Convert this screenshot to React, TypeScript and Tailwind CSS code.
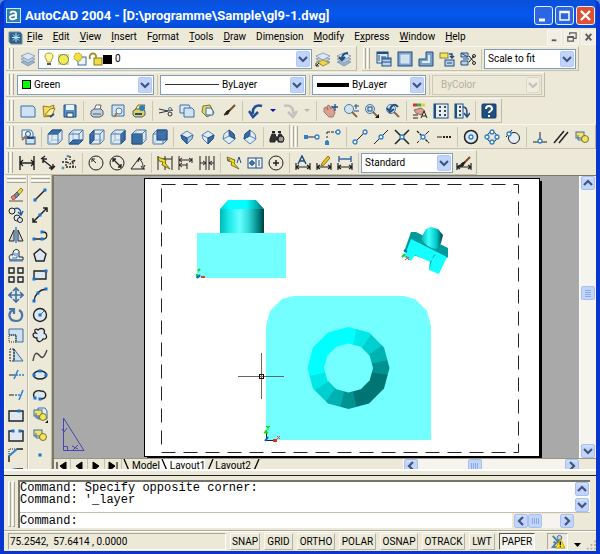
import React, { type ReactNode } from "react";

const B = "#3a6ea5";
const D = "#1f4e82";
const L = "#b9d2ea";

/* ---------- Icon fragments, all on a 16 x 16 grid ---------- */

const cubeFaces: Record<string, string> = {
  top: "M1 5L5 1H15L11 5Z",
  bottom: "M1 15L5 11H15L11 15Z",
  left: "M1 5L5 1V11L1 15Z",
  right: "M11 5L15 1V11L11 15Z",
  front: "M1 5H11V15H1Z",
  back: "M5 1H15V11H5Z",
};

function Cube({ face }: { face: string }) {
  return (
    <g strokeWidth="1" stroke="#4a78a8">
      <path d="M1 5L5 1H15V11L11 15H1Z" fill="#dfeaf5" />
      <path d="M5 1V11H15M5 11L1 15" stroke="#9db9d6" />
      <path d={cubeFaces[face]} fill={B} stroke={D} />
      <path d="M1 5H11V15M11 5L15 1" />
    </g>
  );
}

const isoFaces: Record<string, string> = {
  sw: "M2 6L8 9V15L3 10Z",
  se: "M8 9L14 6L13 10L8 15Z",
  ne: "M8 1L13 5L14 10L9 7Z",
  nw: "M8 1L3 5L2 10L7 7Z",
};

function Iso({ face }: { face: string }) {
  const low = face === "sw" || face === "se";
  return (
    <g stroke="#4a78a8" strokeWidth="0.9">
      {low ? (
        <path d="M8 2L14 6L13 10L8 15L3 10L2 6Z" fill="#e2ecf6" />
      ) : (
        <path d="M8 1L13 5L14 10L8 15L2 10L3 5Z" fill="#e2ecf6" />
      )}
      <path d={low ? "M2 6L8 9L14 6M8 9V15" : "M2 10L8 7L14 10M8 7V1"} />
      {face === "sw" && <path d="M8 9L14 6L13 10L8 15Z" fill="#a9c4df" />}
      <path d={isoFaces[face]} fill={B} stroke={D} />
    </g>
  );
}

const Node = ({ x, y }: { x: number; y: number }) => (
  <circle cx={x} cy={y} r="2" fill="#fff" stroke="#2f7fd0" strokeWidth="1.3" />
);
const Dot = ({ x, y }: { x: number; y: number }) => (
  <rect x={x - 1.5} y={y - 1.5} width="3" height="3" fill="#1673d1" stroke="none" />
);
const Sheet = () => <path d="M1 3H13L15 5V14H1Z" fill="#cfe2f4" stroke={B} />;
const Layers = () => (
  <g strokeWidth="0.7" stroke="#7288a0">
    <path d="M1 11L8 8L15 11L8 15Z" fill="#9fb7cf" />
    <path d="M1 8L8 5L15 8L8 12Z" fill="#bcd0e3" />
    <path d="M1 5L8 2L15 5L8 9Z" fill="#dbe7f2" />
  </g>
);
const Pencil = () => (
  <path d="M12 1L14 3L8 10L5 11L6 8Z" fill="#f0c020" stroke="#7a5a10" strokeWidth="0.8" />
);
const Brush = () => (
  <g>
    <path d="M14 2L8 8" stroke="#7b4a26" strokeWidth="2" />
    <path d="M9 7L7 11L3 12L6 8Z" fill="#222" />
  </g>
);
const Lens = () => (
  <g>
    <circle cx="6" cy="6" r="4.500" fill="#cfe3f4" stroke="#56789c" />
    <path d="M9 9L14 14" stroke="#8a6a4a" strokeWidth="2" />
  </g>
);
const Dim = () => (
  <path d="M1 8V15M15 8V15M1 12H15M4 10L1 12L4 14M12 10L15 12L12 14" strokeWidth="1.2" />
);
const Bolt = () => (
  <path d="M1 2L9 5L8 8L13 14L5 10L6 7L2 6Z" fill="#f3dc20" stroke="#5c5414" strokeWidth="0.8" />
);
const Region = () => (
  <g>
    <rect x="2" y="3" width="8" height="6" fill="#f5e463" stroke={B} />
    <circle cx="11" cy="10" r="3.500" fill="#f5e463" stroke="#7b7420" />
    <path d="M4 6V11H8" stroke={B} />
  </g>
);

const icons: Record<string, ReactNode> = {
  layers: <Layers />,
  layerCurrent: (
    <>
      <Layers />
      <path d="M3 11L8 9L14 12L8 15Z" fill="#f1d63c" stroke="#98821c" strokeWidth="0.7" />
      <path d="M1 15L4 12M1 12V15H4" />
    </>
  ),
  layerPrev: (
    <>
      <Layers />
      <path d="M6 8C6 3 9 2 12 2M3 6L6 9L9 6" stroke={D} strokeWidth="2" />
    </>
  ),
  viewports: (
    <g stroke={D}>
      <rect x="1" y="1" width="11" height="11" fill="#dce8f4" />
      <path d="M1 2H12" strokeWidth="2" />
      <path d="M3 4V10M5 6H10" />
      <rect x="6" y="7" width="9" height="8" fill={L} />
      <path d="M6 8H15M6 11H15" />
    </g>
  ),
  single: (
    <g stroke={D}>
      <rect x="1" y="1" width="14" height="14" fill="#7ba3ca" />
      <rect x="4" y="4" width="8" height="8" fill="#cfe0f0" stroke="#dfeaf6" />
    </g>
  ),
  polyView: (
    <g stroke={D}>
      <path d="M8 1H15V15H1V8H8Z" fill="#7ba3ca" />
      <path d="M11 4V11H4" stroke="#dfeaf6" strokeWidth="2" />
    </g>
  ),
  objView: (
    <g stroke={D}>
      <rect x="1" y="2" width="8" height="5" fill="#f5e463" stroke="#8b8330" />
      <path d="M10 3H13V7M11 5L13 7L15 5" strokeWidth="1.500" />
      <rect x="6" y="9" width="9" height="6" fill={L} />
      <path d="M8 12H13" />
    </g>
  ),
  clipView: (
    <g stroke={D}>
      <path d="M1 2H8V6H1ZM1 10H8V14H1ZM1 2L8 6M3 8H9" fill={L} />
      <path d="M9 5L14 11M9 11L14 5" stroke="#222" />
      <circle cx="14" cy="5" r="1.500" stroke="#222" />
      <circle cx="14" cy="12" r="1.500" stroke="#222" />
    </g>
  ),
  new: <Sheet />,
  open: (
    <>
      <path d="M2 3L8 4L13 2L11 13L3 14Z" fill="#f3d95c" stroke="#947d25" />
      <path d="M4 12L9 6L14 5L11 13Z" fill="#fbeea0" stroke="#947d25" />
      <path d="M9 14L13 11" stroke={D} strokeWidth="2" />
    </>
  ),
  save: (
    <>
      <path d="M2 2H14V14H2Z" fill="#5c8fc4" stroke={D} />
      <rect x="4" y="2" width="8" height="5" fill="#e8f0f8" stroke="none" />
      <rect x="5" y="10" width="6" height="4" fill="#fff" stroke={D} />
    </>
  ),
  print: (
    <>
      <path d="M5 7L7 2H12L11 7" fill="#fff" stroke="#667" />
      <path d="M2 8L5 6H12L14 8V12L11 14H4L2 12Z" fill="#c2cfdc" stroke="#4d5f74" />
      <path d="M4 11H12" stroke="#4d5f74" />
    </>
  ),
  preview: (
    <>
      <path d="M2 2H14V13H2Z" fill="#cfe2f4" stroke={B} />
      <circle cx="9" cy="8" r="3" fill="#eef6fd" stroke="#56789c" />
      <path d="M7 10L4 14" stroke="#a5743d" strokeWidth="2" />
    </>
  ),
  publish: (
    <>
      <path d="M4 7L7 2H14L11 7" fill="#fff36a" stroke="#7d761f" />
      <path d="M2 8L5 6H12L14 8V12L11 14H4L2 12Z" fill="#e0d05c" stroke="#4d5f74" />
      <circle cx="11" cy="5" r="3" fill="#2d7dc4" stroke="none" />
      <path d="M4 11H11" stroke={D} strokeWidth="2" />
    </>
  ),
  cut: (
    <>
      <path d="M1 6L10 8L15 7M1 10L10 8" stroke="#333" />
      <circle cx="12" cy="6" r="1.500" stroke="#56789c" />
      <circle cx="12" cy="11" r="2" stroke="#333" />
    </>
  ),
  copy: (
    <>
      <path d="M1 2H10L11 4V10H1Z" fill="#dce9f5" stroke={B} />
      <path d="M5 5H13L15 7V14H5Z" fill="#cfe2f4" stroke={B} />
    </>
  ),
  paste: (
    <>
      <path d="M3 3L10 2L14 10L7 14L2 9Z" fill="#e8d469" stroke="#7f7329" />
      <path d="M6 5H11L13 8V12H6Z" fill="#eaf2fa" stroke={B} />
    </>
  ),
  match: <Brush />,
  undo: (
    <path d="M14 3C8 1 4 5 5 11M1 8L5 14L10 9" stroke="#1f4f96" strokeWidth="2.500" />
  ),
  redo: (
    <path d="M2 3C8 1 12 5 11 11M6 9L11 14L15 8" stroke="#c3c3bd" strokeWidth="2.500" />
  ),
  pan: (
    <>
      <path d="M2 5L4 4L6 7L5 3L7 2L9 6L9 3L11 4L13 10L11 14H7L2 9Z" fill="#dba294" stroke="#96655c" strokeWidth="0.8" />
      <path d="M13 1V8M10 4H16" stroke={D} strokeWidth="1.3" />
    </>
  ),
  zoomRt: (
    <>
      <Lens />
      <path d="M13 1V6M11 3H16M11 8H16" stroke={D} />
    </>
  ),
  zoomWin: (
    <>
      <Lens />
      <rect x="4" y="4" width="4" height="4" stroke={D} />
      <path d="M15 11V15H11Z" fill="#111" stroke="none" />
    </>
  ),
  zoomPrev: (
    <>
      <Lens />
      <path d="M13 4C10 0 6 2 5 7M2 5L5 9L9 6" stroke={D} strokeWidth="2" />
    </>
  ),
  props: (
    <>
      <path d="M1 2H5" stroke="#e03030" strokeWidth="3" />
      <path d="M5 2H9" stroke="#30b050" strokeWidth="3" />
      <path d="M9 2H13" stroke="#e0d030" strokeWidth="3" />
      <path d="M2 7L9 5L13 8L9 12L4 10Z" fill="#dba294" stroke="#96655c" />
      <path d="M9 15L12 8L15 15M10 13H14M1 12H6M1 15H6" />
    </>
  ),
  designCenter: (
    <>
      <rect x="1" y="1" width="14" height="14" fill="#e5edf5" stroke={D} />
      <path d="M2 1V15" stroke={D} strokeWidth="2" />
      <path d="M6 4H8M11 4H13M6 8H8M11 8H13M6 12H8M11 12H13" stroke="#3f4c3c" strokeWidth="2" />
    </>
  ),
  toolPalettes: (
    <>
      <rect x="1" y="1" width="8" height="14" fill="#e5edf5" stroke={D} />
      <path d="M2 1V15" stroke={D} strokeWidth="2" />
      <path d="M5 4H7M5 8H7M5 12H7" stroke="#3f4c3c" strokeWidth="2" />
      <path d="M9 4C13 4 13 7 13 13M10 10L13 14L16 10" stroke={D} strokeWidth="1.500" />
    </>
  ),
  help: (
    <>
      <rect x="1" y="1" width="14" height="14" rx="1" fill={D} stroke="#143a66" />
      <path d="M5 6C5 2 11 2 11 6C11 8 8 8 8 10" stroke="#fff" strokeWidth="2" />
      <path d="M7 12H9V14H7Z" fill="#fff" stroke="none" />
    </>
  ),
  namedViews: (
    <>
      <path d="M2 1H11L13 4V9H2Z" fill="#eef4fa" stroke={B} />
      <rect x="6" y="8" width="9" height="7" fill="#cfe2f4" stroke={D} />
      <path d="M7 9H14" stroke={D} strokeWidth="2" />
      <circle cx="8" cy="5" r="2.500" stroke={D} />
      <path d="M6 7L2 11" stroke="#a5743d" strokeWidth="2" />
    </>
  ),
  camera: (
    <g fill="#333" stroke="#222">
      <path d="M1 10L3 5H6L7 8H9L10 5H12L14 8V13H9V11H6V13H1Z" />
      <circle cx="12" cy="10" r="3" fill="#999" />
      <path d="M3 3H6M9 3H12" strokeWidth="2" />
    </g>
  ),
  trackPt: (
    <>
      <path d="M2 8H13" />
      <rect x="0" y="6" width="4" height="4" fill="#2f7fd0" stroke="none" />
      <Node x={13} y={8} />
    </>
  ),
  snapFrom: (
    <>
      <path d="M2 3H11" strokeDasharray="3 1" />
      <path d="M2 3V14" strokeDasharray="2 2" />
      <rect x="0" y="12" width="4" height="4" fill="#2f7fd0" stroke="none" />
      <Node x={13} y={3} />
    </>
  ),
  endpoint: (
    <>
      <path d="M3 13L13 3" />
      <Node x={3} y={13} />
      <Node x={13} y={3} />
    </>
  ),
  midpoint: (
    <>
      <path d="M1 15L15 1" />
      <Node x={8} y={8} />
    </>
  ),
  intersect: (
    <>
      <path d="M1 1L15 15M15 1L1 15" strokeWidth="1.500" />
      <Node x={8} y={8} />
    </>
  ),
  apparent: (
    <>
      <path d="M2 2L14 14" strokeDasharray="3 1" strokeWidth="1.3" />
      <path d="M14 2L2 14" strokeDasharray="5 2" />
      <Node x={8} y={8} />
    </>
  ),
  extension: (
    <>
      <path d="M1 8H6" />
      <path d="M7 8H16" strokeDasharray="2 1" strokeWidth="2" />
    </>
  ),
  center: (
    <>
      <circle cx="8" cy="8" r="6.500" fill="#dce7f2" strokeWidth="1.500" />
      <Node x={8} y={8} />
    </>
  ),
  quadrant: (
    <>
      <circle cx="8" cy="8" r="5" />
      <Node x={8} y={3} />
      <Node x={8} y={13} />
      <Node x={3} y={8} />
      <Node x={13} y={8} />
    </>
  ),
  tangent: (
    <>
      <circle cx="9" cy="9" r="5.500" fill="#e5edf5" />
      <path d="M1 8L7 1" />
      <Node x={4} y={5} />
    </>
  ),
  perp: (
    <>
      <path d="M1 13H15M8 3V13" />
      <Node x={8} y={12} />
    </>
  ),
  parallel: <path d="M1 14L11 2M6 14L15 3" strokeWidth="1.500" />,
  insertPt: <Region />,
  dimLinear: <path d="M1 1V15M15 1V15M1 8H15M4 5L1 8L4 11M12 5L15 8L12 11" strokeWidth="1.4" />,
  dimAligned: <path d="M3 5L13 13M1 4L5 1M11 15L15 11M3 8V4H7M9 13H13V9" strokeWidth="1.4" />,
  dimOrd: (
    <>
      <path d="M5 3V12H15M6 7L9 9L12 6V12M1 7H3M9 1V5M14 5L12 8" strokeDasharray="2 1" strokeWidth="1.3" />
      <circle cx="7" cy="1" r="1" stroke={B} />
      <circle cx="2" cy="13" r="1" stroke={B} />
    </>
  ),
  dimRad: (
    <>
      <circle cx="8" cy="8" r="7" />
      <path d="M8 8L4 4M4 7V4H7" />
    </>
  ),
  dimDia: (
    <>
      <circle cx="8" cy="8" r="7" />
      <path d="M4 4L12 12M4 7V4H7M9 12H12V9" strokeWidth="1.3" />
    </>
  ),
  dimAng: <path d="M1 14H15M1 14L10 2M8 4C12 5 13 9 13 12M8 7L9 3L12 5M11 11L13 14L15 10" />,
  quickDim: (
    <>
      <path d="M1 1V15M15 1V15M1 4H15M8 1V15" />
      <Bolt />
    </>
  ),
  baseline: <path d="M1 1V15M1 5H14M1 10H9M14 3V8M9 8V14M4 3L1 5L4 7M4 8L1 10L4 12M11 3L14 5L11 7" />,
  continue: <path d="M1 1V15M15 1V15M7 1V15M10 1V15M1 8H7M10 8H15M4 6L7 8L4 10M13 6L10 8L13 10" />,
  leader: (
    <>
      <Bolt />
      <path d="M11 8L13 2L15 8M1 5H4" stroke={D} />
    </>
  ),
  tolerance: (
    <g stroke={D}>
      <rect x="1" y="3" width="14" height="10" fill="#eef4fa" />
      <path d="M9 3V13M12 5V11" />
      <circle cx="5" cy="8" r="2" />
      <path d="M5 5V11M2 8H8" />
    </g>
  ),
  centerMark: (
    <>
      <circle cx="8" cy="8" r="7" />
      <path d="M8 5V11M5 8H11" strokeWidth="1.500" />
    </>
  ),
  dimEdit: (
    <>
      <path d="M3 9L7 1L11 9M5 6H9" stroke={D} strokeWidth="1.500" />
      <Dim />
    </>
  ),
  dimText: (
    <>
      <Dim />
      <Pencil />
    </>
  ),
  dimUpdate: (
    <>
      <path d="M2 1V7M14 1V7M2 4H14" stroke={B} strokeWidth="1.500" />
      <Dim />
    </>
  ),
  dimStyle: (
    <>
      <Dim />
      <Brush />
    </>
  ),
  erase: (
    <>
      <path d="M1 14H15" stroke="#555" />
      <path d="M9 5L13 1L15 3L11 8Z" fill="#f2d13e" stroke="#8c7726" />
      <path d="M6 8L9 5L11 8L8 11Z" fill="#6e8fb5" stroke="#456" />
      <path d="M3 10L6 8L8 11L5 13Z" fill="#e88a78" stroke="#a34c40" />
    </>
  ),
  copyObj: (
    <>
      <circle cx="4" cy="4" r="3" />
      <circle cx="9" cy="11" r="3" fill="#dce7f2" />
      <circle cx="12" cy="13" r="2.500" fill="#dce7f2" />
      <path d="M6 2C10 0 13 2 13 7M10 5L13 8L15 4" stroke="#1e5ca8" strokeWidth="1.500" />
    </>
  ),
  mirror: (
    <>
      <path d="M6 3V14H1ZM10 3V14H15Z" fill="#cbd7e3" />
      <path d="M8 0V16" stroke="#2f7fd0" strokeWidth="1.500" />
    </>
  ),
  offset: (
    <>
      <path d="M2 13C0 9 2 7 5 8C4 1 12 1 11 6V10H15V13H2Z" fill="#e5edf5" />
      <path d="M4 11H9V6M7 6V9M1 14H15" stroke="#2f7fd0" />
    </>
  ),
  array: (
    <g fill="#e5edf5" strokeWidth="1.4">
      <path d="M1 1H6V6H1ZM10 1H15V6H10ZM1 10H6V15H1ZM10 10H15V15H10Z" />
    </g>
  ),
  move: (
    <path d="M8 1V15M1 8H15M5 4L8 1L11 4M5 12L8 15L11 12M4 5L1 8L4 11M12 5L15 8L12 11" stroke="#3d6fa8" strokeWidth="1.600" />
  ),
  rotate: (
    <path d="M5 3C-1 6 1 14 8 14C15 14 16 6 11 3M1 2H6V7" stroke="#4a76a8" strokeWidth="2.200" />
  ),
  scale: (
    <>
      <path d="M1 2H15V15H8V8H1Z" fill="#cfe0f0" stroke={B} />
      <path d="M1 8H8V15H1Z" strokeDasharray="1 1" />
    </>
  ),
  stretch: (
    <>
      <path d="M6 2L15 14H6Z" fill="#cfe0f0" stroke={B} />
      <path d="M6 2V14H2V2Z" strokeDasharray="2 1" />
    </>
  ),
  trim: (
    <>
      <path d="M1 8H7" />
      <path d="M8 8H16" stroke="#2f7fd0" strokeDasharray="2 1" strokeWidth="1.500" />
      <path d="M6 12L10 3" stroke="#2f7fd0" strokeWidth="1.500" />
    </>
  ),
  extend: (
    <>
      <path d="M1 8H6" />
      <path d="M7 8H12" stroke="#2f7fd0" strokeDasharray="2 1" strokeWidth="1.500" />
      <path d="M11 13L15 3" stroke="#2f7fd0" strokeWidth="1.500" />
    </>
  ),
  breakPt: (
    <>
      <path d="M1 4H15V14H1Z" fill="#e0e9f3" strokeWidth="1.400" />
      <Dot x={11} y={4} />
    </>
  ),
  breakObj: (
    <>
      <path d="M4 4H1V14H15V4H12" fill="#e0e9f3" strokeWidth="1.400" />
      <Dot x={5} y={4} />
      <Dot x={12} y={4} />
    </>
  ),
  chamfer: (
    <>
      <path d="M1 15V9M9 2H15" strokeWidth="1.500" />
      <path d="M1 9V2H9" strokeDasharray="1 1" />
      <path d="M1 9L9 2" stroke="#2f7fd0" strokeWidth="2" />
    </>
  ),
  fillet: (
    <>
      <path d="M1 15V9M9 2H15" strokeWidth="1.500" />
      <path d="M1 9C1 4 4 2 9 2" stroke="#2f7fd0" strokeWidth="2" />
    </>
  ),
  line: (
    <>
      <path d="M3 13L13 3" strokeWidth="1.500" />
      <Dot x={3} y={13} />
      <Dot x={13} y={3} />
    </>
  ),
  xline: (
    <>
      <path d="M1 15L15 1M1 11V15H5M11 1H15V5" strokeWidth="1.500" />
      <Dot x={8} y={8} />
    </>
  ),
  pline: (
    <>
      <path d="M2 12H11C16 12 16 5 11 5" strokeWidth="1.300" />
      <Dot x={2} y={12} />
      <Dot x={10} y={12} />
      <Dot x={10} y={5} />
    </>
  ),
  polygon: <path d="M8 2L14 7L12 14H4L2 7Z" fill="#dce7f2" strokeWidth="1.400" />,
  rect: (
    <>
      <path d="M2 4H14V12H2Z" fill="#dce7f2" strokeWidth="1.400" />
      <Dot x={14} y={4} />
      <Dot x={2} y={12} />
    </>
  ),
  arc: (
    <>
      <path d="M2 14C3 7 7 3 14 2" strokeWidth="1.300" />
      <Dot x={2} y={14} />
      <Dot x={6} y={6} />
      <Dot x={14} y={2} />
    </>
  ),
  circle: (
    <>
      <circle cx="8" cy="8" r="6.500" fill="#dce7f2" strokeWidth="1.400" />
      <path d="M8 8L12 4" stroke="#1673d1" />
      <Dot x={8} y={8} />
    </>
  ),
  cloud: (
    <path d="M6 3C9 0 14 2 12 6C16 8 15 13 11 12C9 16 4 15 5 11C0 11 0 5 4 6C1 3 4 1 6 3Z" fill="#dce7f2" strokeWidth="1.300" />
  ),
  spline: <path d="M1 14C3 2 6 7 8 9C11 13 13 8 15 3" strokeWidth="1.400" stroke="#444" />,
  ellipse: (
    <>
      <ellipse cx="8" cy="8" rx="6.500" ry="4" fill="#dce7f2" strokeWidth="1.400" />
      <Dot x={8} y={4} />
      <Dot x={2} y={8} />
      <Dot x={14} y={8} />
    </>
  ),
  ellArc: (
    <>
      <path d="M2 10C0 4 6 3 9 4C15 4 16 12 8 12" fill="#dce7f2" strokeWidth="1.400" />
      <Dot x={3} y={11} />
      <Dot x={8} y={12} />
    </>
  ),
  insertBlock: (
    <>
      <path d="M6 1H13L15 4V12H6Z" fill="#e5edf5" stroke={B} />
      <Region />
      <path d="M16 13V16H13Z" fill="#111" stroke="none" />
    </>
  ),
  makeBlock: <Region />,
  point: <Dot x={8} y={8} />,
  hatch: <path d="M2 3V10M14 3V10M2 6H14M2 3H5M11 3H14" stroke={B} strokeWidth="1.500" />,
};

for (const f of Object.keys(cubeFaces)) icons["cube-" + f] = <Cube face={f} />;
for (const f of Object.keys(isoFaces)) icons["iso-" + f] = <Iso face={f} />;

function Icon({ name }: { name: string }) {
  return (
    <svg viewBox="0 0 16 16" className="size-4 shrink-0" fill="none" stroke="#222" aria-hidden="true">
      {icons[name]}
    </svg>
  );
}

function Tool({ name }: { name: string }) {
  return (
    <button type="button" aria-label={name} className="flex h-5 w-[21px] shrink-0 items-center justify-center">
      <Icon name={name} />
    </button>
  );
}

const Sep = () => (
  <div className="flex w-[6px] shrink-0 justify-center">
    <div className="h-5 w-px bg-[#cbc7b4]" />
  </div>
);

const Grip = () => (
  <div className="mr-[3px] flex h-[21px] shrink-0 gap-px">
    <div className="w-[3px] border-r border-l border-r-[#aca899] border-l-white" />
    <div className="w-[3px] border-r border-l border-r-[#aca899] border-l-white" />
  </div>
);

function Bar({ children, grow = false }: { children: ReactNode; grow?: boolean }) {
  return (
    <div
      role="toolbar"
      className={
        "flex h-[25px] items-center border-t border-r border-b border-t-[#f8f6ee] border-r-[#bdb9a6] border-b-[#c5c1ae] pl-px " +
        (grow ? "min-w-0 grow" : "shrink-0 pr-[2px]")
      }
    >
      {children}
    </div>
  );
}

/* A string of tool names; "|" is a separator, "v" and "w" are small drop arrows. */
function Tools({ list }: { list: string }) {
  return (
    <>
      {list.split(" ").map((n, i) =>
        n === "|" ? (
          <Sep key={i} />
        ) : n === "v" || n === "w" ? (
          <button key={i} type="button" aria-label="History" className="flex w-[13px] shrink-0 justify-center">
            <svg viewBox="0 0 6 4" className="h-1 w-[6px]">
              <path d="M0 0H6L3 3Z" fill={n === "v" ? "#1313a0" : "#b8b8b0"} />
            </svg>
          </button>
        ) : (
          <Tool key={i} name={n} />
        ),
      )}
    </>
  );
}

function Chevron({ dir = "down" }: { dir?: string }) {
  const d: Record<string, string> = {
    down: "M3 5L7 9L11 5",
    up: "M3 9L7 5L11 9",
    left: "M9 3L5 7L9 11",
    right: "M5 3L9 7L5 11",
  };
  return (
    <svg viewBox="0 0 14 14" className="size-[14px] shrink-0" aria-hidden="true">
      <rect x="0.500" y="0.500" width="13" height="13" rx="1.500" fill="#c1d4fb" stroke="#a9c0ee" />
      <path d="M2 2H12" stroke="#dfe9fe" />
      <path d={d[dir]} fill="none" stroke="#41557c" strokeWidth="2.200" />
    </svg>
  );
}

function Arrow({ dir }: { dir: string }) {
  return (
    <button type="button" aria-label={"Scroll " + dir} className="size-[14px] shrink-0">
      <Chevron dir={dir} />
    </button>
  );
}

function Thumb({ vertical = false }: { vertical?: boolean }) {
  return (
    <div className={"flex size-[14px] shrink-0 items-center justify-center gap-px rounded-xs border border-[#a9c0ee] bg-[#c1d4fb] " + (vertical ? "flex-col" : "")}>
      {[0, 1, 2, 3].map((i) => (
        <div key={i} className={"bg-[#8daae6] " + (vertical ? "h-px w-[6px]" : "h-[6px] w-px")} />
      ))}
    </div>
  );
}

function Combo({
  label,
  value,
  width,
  disabled = false,
  children,
}: {
  label: string;
  value: string;
  width: string;
  disabled?: boolean;
  children?: ReactNode;
}) {
  return (
    <label
      className={
        "flex h-[20px] shrink-0 items-center border pr-px " +
        (disabled ? "border-[#cbc8b6] text-[#b4b1a0] " : "border-[#7f9db9] bg-white ") +
        width
      }
    >
      {children}
      <select
        aria-label={label}
        disabled={disabled}
        defaultValue={value}
        className="h-[18px] min-w-0 grow appearance-none bg-transparent px-[3px] text-[10px] leading-[16px] outline-none"
      >
        <option>{value}</option>
      </select>
      <svg viewBox="0 0 14 16" className="h-4 w-[14px] shrink-0" fill="none" aria-hidden="true">
        <rect x="0.500" y="0.500" width="13" height="15" rx="1.500" fill={disabled ? "#efede1" : "#c1d4fb"} stroke={disabled ? "#dad7c6" : "#b3c8f2"} />
        <path d="M3 6L7 10L11 6" stroke={disabled ? "#c5c2b0" : "#41557c"} strokeWidth="2.200" />
      </svg>
    </label>
  );
}

/* ---------- Paper space drawing ---------- */

const CX = 348.5;
const CY = 368;
const ngon = (r: number) =>
  Array.from({ length: 12 }, (_, i) => {
    const a = (i * Math.PI) / 6;
    return `${(CX + r * Math.cos(a)).toFixed(1)},${(CY + r * Math.sin(a)).toFixed(1)}`;
  }).join(" ");
const shades = [
  "#009191", "#00b1b1", "#00cfcf", "#00e8e8", "#00ffff", "#00ffff", "#00ffff", "#00ffff",
  "#00ffff", "#00e8e8", "#00cfcf", "#00b1b1", "#009191", "#007373", "#007373", "#007373",
];
const wedge = (i: number) => {
  const p = (k: number) => {
    const a = ((i + k) * Math.PI) / 8;
    return `${(CX + 46 * Math.cos(a)).toFixed(1)},${(CY - 46 * Math.sin(a)).toFixed(1)}`;
  };
  return `${CX},${CY} ${p(-0.5)} ${p(0.54)}`;
};

function Drawing() {
  return (
    <svg viewBox="54 176 525 282" className="h-full min-w-0 grow bg-[#a9a9a9]" role="img" aria-label="Layout1 drawing">
      <defs>
        <linearGradient id="cyl">
          <stop offset="0" stopColor="#00b8b8" />
          <stop offset="0.2" stopColor="#19e9e9" />
          <stop offset="0.45" stopColor="#66ffff" />
          <stop offset="0.65" stopColor="#30d8d8" />
          <stop offset="0.88" stopColor="#008080" />
          <stop offset="1" stopColor="#003c3c" />
        </linearGradient>
        <linearGradient id="cap">
          <stop offset="0" stopColor="#00d0d0" />
          <stop offset="0.2" stopColor="#00ffff" />
          <stop offset="0.6" stopColor="#00ffff" />
          <stop offset="1" stopColor="#007878" />
        </linearGradient>
        <linearGradient id="small">
          <stop offset="0" stopColor="#00b0b0" />
          <stop offset="0.35" stopColor="#3cffff" />
          <stop offset="0.7" stopColor="#00c8c8" />
          <stop offset="1" stopColor="#003c3c" />
        </linearGradient>
        <clipPath id="ring">
          <polygon points={ngon(41)} />
        </clipPath>
      </defs>
      <rect x="147" y="181" width="395" height="279" fill="#000" />
      <rect x="144.500" y="178.500" width="395" height="278" fill="#fff" stroke="#000" />
      <rect x="161.500" y="184.500" width="357" height="268" fill="none" stroke="#222" strokeDasharray="14 8" />

      <rect x="197" y="233" width="89" height="45" fill="#73ffff" />
      <rect x="220" y="209" width="44" height="24" fill="url(#cyl)" />
      <path d="M220 209L228 200H256L264 209Z" fill="url(#cap)" />
      <path d="M197 278V274M198 271L200 269" stroke="#10e010" strokeWidth="2" />
      <path d="M201 277H205" stroke="#e04020" strokeWidth="2" />
      <path d="M197 278L200 275" stroke="#1060d0" strokeWidth="2" />

      <path d="M411 232L416 232L448 248L448 257L440 264L404 252Z" fill="#009a9a" />
      <path d="M411 239L447 257L439 274L429 270L430 262L415 255L411 261L404 257Z" fill="#14ffff" />
      <path d="M436 254L430 262L429 270L433 256Z" fill="#00a5a5" />
      <path d="M421 238L426 229L431 227L438 229L443 235L441 243L437 249C431 249 423 244 421 238Z" fill="url(#small)" />
      <path d="M402 257L405 254" stroke="#10d010" strokeWidth="2" />
      <path d="M404 250L407 252" stroke="#1060d0" strokeWidth="2" />
      <path d="M405 260L409 257M406 256L409 260" stroke="#e04020" />

      <path d="M266 440V326L270 311L282 299L294 296H404L415 299L427 311L431 326V440Z" fill="#73ffff" />
      <g clipPath="url(#ring)">
        {shades.map((c, i) => (
          <polygon key={i} points={wedge(i)} fill={c} />
        ))}
      </g>
      <polygon points={ngon(24.5)} fill="#73ffff" />

      <path d="M238 376.500H284M261.500 353V399" stroke="#6b675c" />
      <rect x="259.500" y="374.500" width="4" height="4" fill="none" stroke="#111" />
      <path d="M266 440.500H276M266.500 440V431" stroke="#222" />
      <path d="M264 433L266 430L268 433ZM266 426L268 428L270 426M268 428V430" stroke="#10e010" fill="#10e010" />
      <path d="M273 439H277V442H273Z" fill="#d03818" />
      <path d="M277 436L280 439M280 436L277 439" stroke="#e04020" />
      <path d="M265 441L268 437" stroke="#1060d0" strokeWidth="2" />

      <g fill="none" stroke="#4646b4">
        <path d="M63.500 418V450.500H84Z" />
        <path d="M63.500 446.500H67.500V450.500M62 429L64 432L67 428M72 446L78 449M78 445L73 450" />
      </g>
    </svg>
  );
}

const menus: [string, number][] = [
  ["File", 0], ["Edit", 0], ["View", 0], ["Insert", 0], ["Format", 1], ["Tools", 0],
  ["Draw", 0], ["Dimension", 4], ["Modify", 0], ["Express", 1], ["Window", 0], ["Help", 0],
];

const modify =
  "erase copyObj mirror offset array move rotate scale stretch trim extend breakPt breakObj chamfer fillet";
const draw =
  "line xline pline polygon rect arc circle cloud spline ellipse ellArc insertBlock makeBlock point hatch";

function SideBar({ list }: { list: string }) {
  return (
    <div role="toolbar" className="flex w-6 flex-col items-center border-r border-l border-r-[#bdb9a6] border-l-[#f8f6ee]">
      <div className="mt-px mb-[2px] flex w-[19px] shrink-0 flex-col gap-px">
        <div className="h-[3px] border-t border-b border-t-white border-b-[#aca899]" />
        <div className="h-[3px] border-t border-b border-t-white border-b-[#aca899]" />
      </div>
      <Tools list={list} />
    </div>
  );
}

function Toggle({ label, width, on = false }: { label: string; width: string; on?: boolean }) {
  return (
    <button
      type="button"
      aria-pressed={on}
      className={
        "h-[17px] shrink-0 border text-center leading-[15px] whitespace-nowrap " +
        (on
          ? "border-t-[#555] border-r-white border-b-white border-l-[#555] bg-[#f5f4ec] "
          : "border-t-[#faf9f3] border-r-[#b5b19f] border-b-[#b5b19f] border-l-[#faf9f3] ") +
        width
      }
    >
      {label}
    </button>
  );
}

export default function App() {
  return (
    <div className="flex h-screen min-h-[400px] flex-col overflow-hidden bg-[#5b8fe0] font-[Roboto,'Liberation_Sans',sans-serif] text-[10px] text-black">
      <div className="flex min-h-0 grow flex-col rounded-t-md border-r-4 border-b-[3px] border-l-4 border-[#0a36d0] bg-[#0a36d0]">
        <header className="flex h-7 shrink-0 items-center rounded-t-sm bg-linear-to-b from-[#0a4fd8] via-[#0558ee] to-[#0349d4] pt-[3px] pr-px pl-[2px]">
          <svg viewBox="0 0 15 15" className="size-[15px]" fill="none">
            <rect x="0.500" y="0.500" width="14" height="14" fill="#3182a6" stroke="#cfe9f3" />
            <path d="M4 5C6 3 10 3 10 6V11M10 7C5 7 4 8 4 9.500C4 12 9 12 10 9" stroke="#fff" strokeWidth="2" />
          </svg>
          <h1 className="grow pl-1 text-[13px] leading-4 font-bold whitespace-nowrap text-white">
            AutoCAD 2004 - [D:\programme\Sample\gl9-1.dwg]
          </h1>
          <div className="flex gap-[2px]">
            {["Minimize", "Restore", "Close"].map((n, i) => (
              <button key={n} type="button" aria-label={n} className="size-[19px]">
                <svg viewBox="0 0 19 19" fill="none">
                  <rect x="0.500" y="0.500" width="18" height="18" rx="2.500" fill={i === 2 ? "#de5233" : "#2b67e4"} stroke="#e6eefc" />
                  {i === 0 && <path d="M5 14H11" stroke="#fff" strokeWidth="3" />}
                  {i === 1 && <path d="M5 5.500H14V14H5ZM5 6.500H14" stroke="#fff" strokeWidth="1.500" />}
                  {i === 2 && <path d="M5 5L14 14M14 5L5 14" stroke="#fff" strokeWidth="2.400" />}
                </svg>
              </button>
            ))}
          </div>
        </header>

        <div className="flex min-h-0 grow flex-col bg-[#ece9d8]">
          <nav className="flex h-[18px] shrink-0 items-center pl-1">
            <svg viewBox="0 0 15 15" className="mr-1 size-[15px]" fill="none">
              <path d="M1 2H12L14 4V14H3L1 12Z" fill="#2d6187" stroke="#6f8fa8" />
              <path d="M8 3V12M4 7.500H12M5 4.500L11 10.500M11 4.500L5 10.500" stroke="#b9ecff" />
            </svg>
            <ul className="flex grow gap-[10px]">
              {menus.map(([m, u]) => (
                <li key={m}>
                  <button type="button" className="block leading-4">
                    {m.slice(0, u)}
                    <span className="underline">{m[u]}</span>
                    {m.slice(u + 1)}
                  </button>
                </li>
              ))}
            </ul>
            <div className="flex gap-[2px]">
              {["M4 10H9", "M5 4V2H12V8H9M3 6H9V11H3ZM3 7H9", "M4 3L10 10M10 3L4 10"].map((d, i) => (
                <button key={d} type="button" aria-label={["Minimize drawing", "Restore drawing", "Close drawing"][i]} className="h-[15px] w-[15px] border border-[#f8f6ee] bg-[#f1efe4]">
                  <svg viewBox="0 0 14 14" fill="none" stroke="#5c5c58" strokeWidth={i === 1 ? "1.300" : "2"}>
                    <path d={d} />
                  </svg>
                </button>
              ))}
            </div>
          </nav>

          <div className="flex shrink-0 flex-col gap-px">
            <div className="flex pl-[2px]">
              <Bar>
                <Grip />
                <Tool name="layers" />
                <Combo label="Layer" value="0" width="w-[274px]">
                  <svg viewBox="0 0 70 16" className="ml-[3px] h-4 w-[70px] shrink-0" fill="none">
                    <path d="M5 11C5 8 3 8 3 5C3 1 11 1 11 5C11 8 9 8 9 11Z" fill="#fbf6a0" stroke="#a79b35" />
                    <path d="M5 13H9" stroke="#555" strokeWidth="2" />
                    <rect x="16" y="3" width="11" height="11" fill="#f0df50" />
                    <circle cx="21.500" cy="8.500" r="5" fill="#fae94a" stroke="#438bbf" />
                    <rect x="36" y="6" width="8" height="8" fill="#eef4fa" stroke={B} />
                    <circle cx="36" cy="6" r="4" fill="#f2df3a" stroke="#b39d24" strokeDasharray="2 1" />
                    <rect x="52" y="7" width="8" height="7" fill="#eddc48" stroke="#86781c" />
                    <path d="M48 8C46 1 55 1 54 6V7" stroke="#9c8d2b" strokeWidth="1.800" />
                    <rect x="61" y="4" width="9" height="9" fill="#000" />
                  </svg>
                </Combo>
                <Tools list="layerCurrent layerPrev" />
              </Bar>
              <div className="w-[5px] shrink-0" />
              <Bar>
                <Grip />
                <Tools list="viewports single polyView objView clipView |" />
                <Combo label="Viewport scale" value="Scale to fit" width="w-[92px]" />
              </Bar>
            </div>
            <div className="flex pl-[2px]">
              <Bar>
                <Grip />
                <Combo label="Color" value="Green" width="w-[137px]">
                  <div className="ml-1 size-[9px] shrink-0 border border-black bg-[#00ff00]" />
                </Combo>
                <Sep />
                <Combo label="Linetype" value="ByLayer" width="w-[146px]">
                  <div className="ml-1 h-px w-[54px] shrink-0 bg-[#333]" />
                </Combo>
                <Sep />
                <Combo label="Lineweight" value="ByLayer" width="w-[114px]">
                  <div className="ml-1 h-1 w-8 shrink-0 bg-black" />
                </Combo>
                <Sep />
                <Combo label="Plot style" value="ByColor" width="w-[110px]" disabled>
                  <div className="w-[5px]" />
                </Combo>
              </Bar>
            </div>
            <div className="flex pl-[2px]">
              <Bar>
                <Grip />
                <Tools list="new open save | print preview publish | cut copy paste match | undo v redo w | pan zoomRt zoomWin zoomPrev | props designCenter toolPalettes | help" />
              </Bar>
            </div>
            <div className="flex pl-[2px]">
              <Bar>
                <Grip />
                <Tools list="namedViews | cube-top cube-bottom cube-left cube-right cube-front cube-back | iso-sw iso-se iso-ne iso-nw | camera" />
              </Bar>
              <Bar grow>
                <Grip />
                <Tools list="trackPt snapFrom | endpoint midpoint intersect apparent extension | center quadrant tangent | perp parallel insertPt" />
              </Bar>
            </div>
            <div className="flex pl-px">
              <Bar>
                <Grip />
                <Tools list="dimLinear dimAligned dimOrd | dimRad dimDia dimAng | quickDim baseline continue | leader tolerance centerMark | dimEdit dimText dimUpdate |" />
                <Combo label="Dimension style" value="Standard" width="w-[92px]" />
                <Tool name="dimStyle" />
              </Bar>
            </div>
          </div>

          <main className="flex min-h-0 grow overflow-hidden">
            <SideBar list={modify} />
            <SideBar list={draw} />
            <div className="flex min-h-0 min-w-0 grow flex-col border-t border-l-2 border-[#7b7868]">
              <div className="flex min-h-0 grow">
                <Drawing />
                <div className="flex w-[17px] shrink-0 flex-col items-center border-l border-white bg-[#f5f4ee]">
                  <Arrow dir="up" />
                  <div className="grow-[2]" />
                  <Thumb vertical />
                  <div className="grow-[3]" />
                  <Arrow dir="down" />
                </div>
              </div>
              <div className="flex h-[11px] shrink-0 overflow-hidden border-t border-[#999583]">
                <div className="flex h-[14px] w-[349px] shrink-0 items-start">
                  {["M3 3V12M12 3L6 7L12 12Z", "M11 3L5 7L11 12Z", "M5 3L11 7L5 12Z", "M12 3V12M4 3L10 7L4 12Z"].map((d, i) => (
                    <button key={d} type="button" aria-label={["First", "Previous", "Next", "Last"][i] + " tab"} className="w-[17px] border-r border-[#c5c1ae]">
                      <svg viewBox="0 0 16 14" className="h-[14px] w-4" fill="#000" stroke="#000">
                        <path d={d} />
                      </svg>
                    </button>
                  ))}
                  {["Model", "Layout1", "Layout2"].map((t, i) => (
                    <button
                      key={t}
                      type="button"
                      className={"flex shrink-0 items-start leading-[14px] " + (i === 1 ? "bg-white" : "")}
                    >
                      <svg viewBox="0 0 10 14" className="h-[14px] w-[10px]">
                        <path d={i === 2 ? "M8 0L2 14" : "M2 0L8 14"} stroke="#000" strokeWidth="1.300" />
                      </svg>
                      {t}
                    </button>
                  ))}
                  <svg viewBox="0 0 10 14" className="h-[14px] w-[10px]">
                    <path d="M8 0L2 14" stroke="#000" strokeWidth="1.300" />
                  </svg>
                </div>
                <div className="flex h-[14px] min-w-0 grow border-l border-white bg-[#f5f4ee]">
                  <Arrow dir="left" />
                  <div className="grow-[3]" />
                  <Thumb />
                  <div className="grow-[5]" />
                  <Arrow dir="right" />
                </div>
                <div className="w-[17px] shrink-0" />
              </div>
            </div>
          </main>

          <section className="shrink-0 border-t-2 border-white pt-1">
            <div className="flex border-t border-b border-t-[#222] border-b-[#aca899] pt-1 pr-[6px] pb-[2px] pl-1">
              <div className="mr-[3px] flex gap-px">
                <div className="my-px w-[3px] border border-t-white border-r-[#aca899] border-b-[#aca899] border-l-white" />
                <div className="my-px w-[3px] border border-t-white border-r-[#aca899] border-b-[#aca899] border-l-white" />
              </div>
              <div className="min-w-0 grow border-t-2 border-l-2 border-[#77746a] font-['Liberation_Mono',monospace] text-[12px]">
                <div className="flex h-[30px] bg-white">
                  <pre className="grow font-['Liberation_Mono',monospace] leading-3">
                    {"Command: Specify opposite corner:\nCommand: '_layer"}
                  </pre>
                  <div className="flex w-[15px] flex-col justify-between">
                    <Arrow dir="up" />
                    <Arrow dir="down" />
                  </div>
                </div>
                <div className="flex h-4 items-center border-t border-[#c5c1ae]">
                  <label className="flex h-full min-w-0 grow items-center bg-white">
                    Command:
                    <input type="text" aria-label="Command" className="min-w-0 grow px-1 outline-none" />
                  </label>
                  <div className="mr-4 ml-[2px] flex w-[60px] bg-[#f5f4ee]">
                    <Arrow dir="left" />
                    <Thumb />
                    <div className="grow" />
                    <Arrow dir="right" />
                  </div>
                </div>
              </div>
            </div>

            <footer className="flex h-[20px] items-center gap-1 border-t border-white pl-1">
              <output className="h-[17px] w-[218px] shrink-0 border border-t-[#aca899] border-r-white border-b-white border-l-[#aca899] pl-px leading-[15px] whitespace-pre">
                75.2542,  57.6414 , 0.0000
              </output>
              <Toggle label="SNAP" width="w-[30px]" />
              <Toggle label="GRID" width="w-[29px]" />
              <Toggle label="ORTHO" width="w-[38px]" />
              <Toggle label="POLAR" width="w-[37px]" />
              <Toggle label="OSNAP" width="w-[38px]" />
              <Toggle label="OTRACK" width="w-[43px]" />
              <Toggle label="LWT" width="w-[26px]" />
              <Toggle label="PAPER" width="w-[36px]" on />
              <button type="button" aria-label="Communication center" className="ml-2 flex h-[17px] w-[21px] shrink-0 items-center justify-center border border-t-[#aca899] border-r-white border-b-white border-l-[#aca899]">
                <svg viewBox="0 0 16 16" className="size-[15px]" fill="none">
                  <path d="M3 2L9 9M4 8C6 12 11 7 12 3M7 9L3 14H9" stroke="#537da8" strokeWidth="2" />
                  <circle cx="10" cy="4" r="2.500" fill="#b9d2ea" stroke={B} />
                  <path d="M11 5L16 15H6Z" fill="#ffe311" stroke="#a38e00" strokeWidth="0.800" />
                  <path d="M11 8V12M11 13V14" stroke="#111" strokeWidth="1.500" />
                </svg>
              </button>
              <button type="button" aria-label="Status bar menu" className="ml-[2px]">
                <svg viewBox="0 0 7 15" className="h-[15px] w-[7px]">
                  <path d="M0 9H7L3.500 13Z" />
                </svg>
              </button>
              <svg viewBox="0 0 12 12" className="ml-auto size-3 self-end">
                <path d="M10 2H12M6 6H8M10 6H12M2 10H4M6 10H8M10 10H12" stroke="#b5b19f" strokeWidth="2" />
              </svg>
            </footer>
          </section>
        </div>
      </div>
    </div>
  );
}
